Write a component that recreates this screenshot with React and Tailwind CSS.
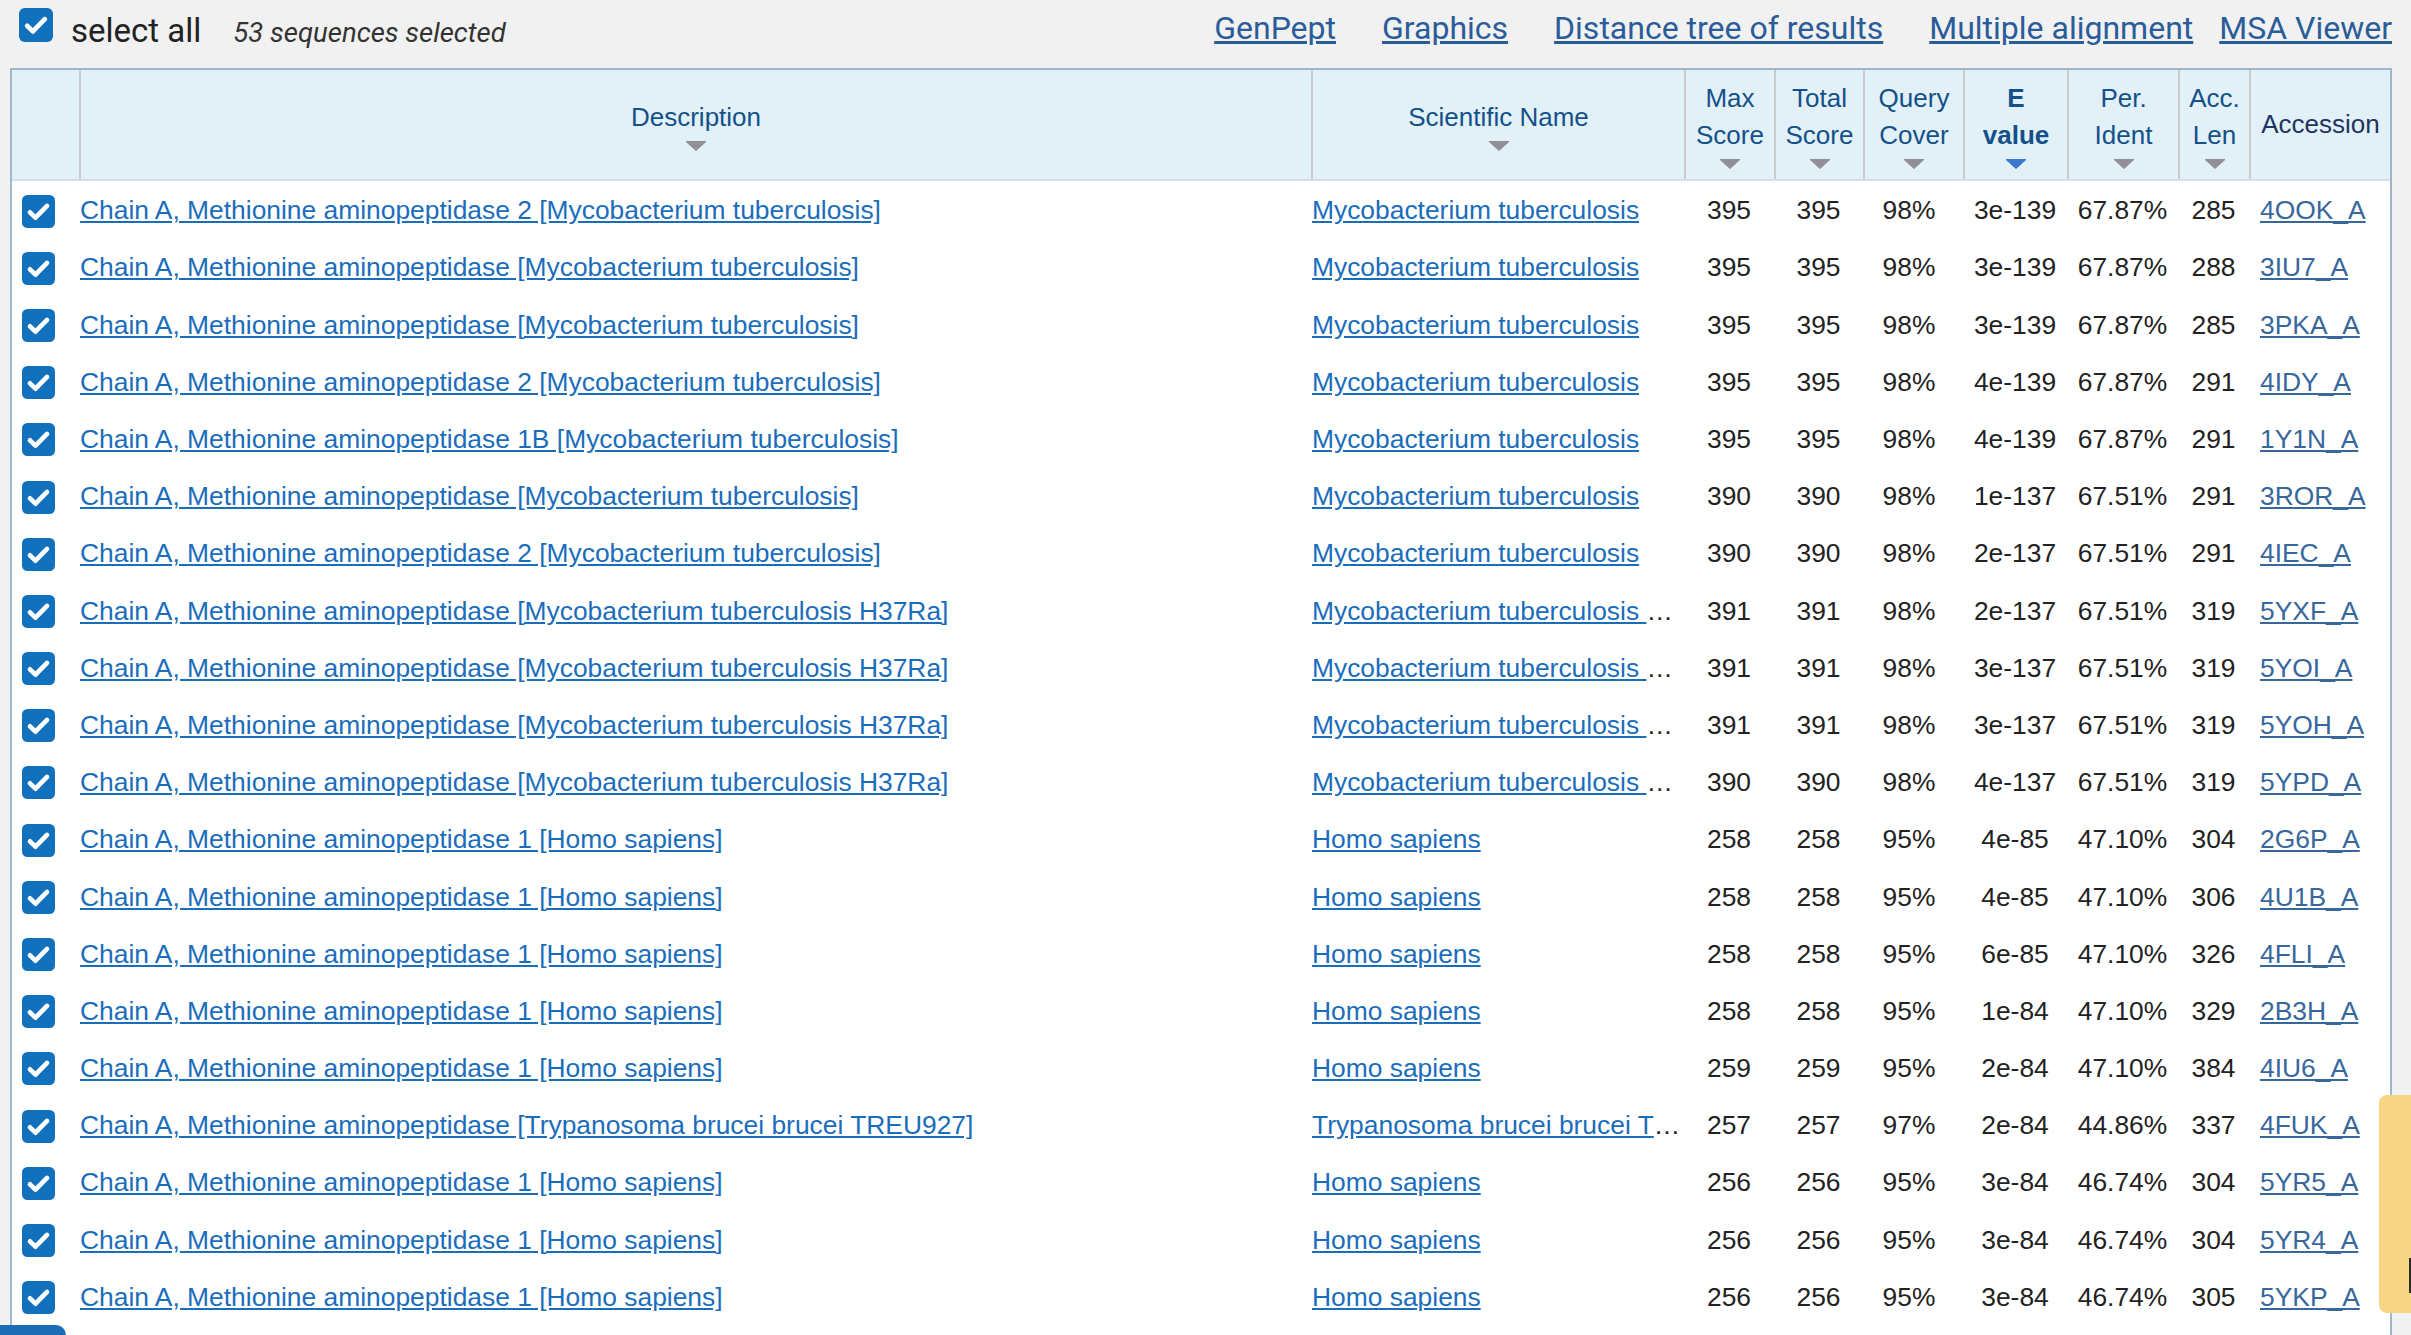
import React from 'react';

const rows = [
  ['Chain A, Methionine aminopeptidase 2 [Mycobacterium tuberculosis]', 'Mycobacterium tuberculosis', '395', '395', '98%', '3e-139', '67.87%', '285', '4OOK_A'],
  ['Chain A, Methionine aminopeptidase [Mycobacterium tuberculosis]', 'Mycobacterium tuberculosis', '395', '395', '98%', '3e-139', '67.87%', '288', '3IU7_A'],
  ['Chain A, Methionine aminopeptidase [Mycobacterium tuberculosis]', 'Mycobacterium tuberculosis', '395', '395', '98%', '3e-139', '67.87%', '285', '3PKA_A'],
  ['Chain A, Methionine aminopeptidase 2 [Mycobacterium tuberculosis]', 'Mycobacterium tuberculosis', '395', '395', '98%', '4e-139', '67.87%', '291', '4IDY_A'],
  ['Chain A, Methionine aminopeptidase 1B [Mycobacterium tuberculosis]', 'Mycobacterium tuberculosis', '395', '395', '98%', '4e-139', '67.87%', '291', '1Y1N_A'],
  ['Chain A, Methionine aminopeptidase [Mycobacterium tuberculosis]', 'Mycobacterium tuberculosis', '390', '390', '98%', '1e-137', '67.51%', '291', '3ROR_A'],
  ['Chain A, Methionine aminopeptidase 2 [Mycobacterium tuberculosis]', 'Mycobacterium tuberculosis', '390', '390', '98%', '2e-137', '67.51%', '291', '4IEC_A'],
  ['Chain A, Methionine aminopeptidase [Mycobacterium tuberculosis H37Ra]', 'Mycobacterium tuberculosis H37Ra', '391', '391', '98%', '2e-137', '67.51%', '319', '5YXF_A'],
  ['Chain A, Methionine aminopeptidase [Mycobacterium tuberculosis H37Ra]', 'Mycobacterium tuberculosis H37Ra', '391', '391', '98%', '3e-137', '67.51%', '319', '5YOI_A'],
  ['Chain A, Methionine aminopeptidase [Mycobacterium tuberculosis H37Ra]', 'Mycobacterium tuberculosis H37Ra', '391', '391', '98%', '3e-137', '67.51%', '319', '5YOH_A'],
  ['Chain A, Methionine aminopeptidase [Mycobacterium tuberculosis H37Ra]', 'Mycobacterium tuberculosis H37Ra', '390', '390', '98%', '4e-137', '67.51%', '319', '5YPD_A'],
  ['Chain A, Methionine aminopeptidase 1 [Homo sapiens]', 'Homo sapiens', '258', '258', '95%', '4e-85', '47.10%', '304', '2G6P_A'],
  ['Chain A, Methionine aminopeptidase 1 [Homo sapiens]', 'Homo sapiens', '258', '258', '95%', '4e-85', '47.10%', '306', '4U1B_A'],
  ['Chain A, Methionine aminopeptidase 1 [Homo sapiens]', 'Homo sapiens', '258', '258', '95%', '6e-85', '47.10%', '326', '4FLI_A'],
  ['Chain A, Methionine aminopeptidase 1 [Homo sapiens]', 'Homo sapiens', '258', '258', '95%', '1e-84', '47.10%', '329', '2B3H_A'],
  ['Chain A, Methionine aminopeptidase 1 [Homo sapiens]', 'Homo sapiens', '259', '259', '95%', '2e-84', '47.10%', '384', '4IU6_A'],
  ['Chain A, Methionine aminopeptidase [Trypanosoma brucei brucei TREU927]', 'Trypanosoma brucei brucei TREU927', '257', '257', '97%', '2e-84', '44.86%', '337', '4FUK_A'],
  ['Chain A, Methionine aminopeptidase 1 [Homo sapiens]', 'Homo sapiens', '256', '256', '95%', '3e-84', '46.74%', '304', '5YR5_A'],
  ['Chain A, Methionine aminopeptidase 1 [Homo sapiens]', 'Homo sapiens', '256', '256', '95%', '3e-84', '46.74%', '304', '5YR4_A'],
  ['Chain A, Methionine aminopeptidase 1 [Homo sapiens]', 'Homo sapiens', '256', '256', '95%', '3e-84', '46.74%', '305', '5YKP_A'],
  ['Chain A, Methionine aminopeptidase 1 [Homo sapiens]', 'Homo sapiens', '256', '256', '95%', '3e-84', '46.74%', '305', '5YKQ_A'],
];

const gridCols = 'grid grid-cols-[67px_1232px_373px_90px_89px_100px_104px_111px_71px_141px]';

function CheckBox({ className }) {
  return (
    <svg className={className} viewBox="0 0 24 24">
      <rect x="0" y="0" width="24" height="24" rx="4" fill="#1271bd" />
      <path d="M5.8 12.6l4 3.9 8.4-8.6" fill="none" stroke="#fff" strokeWidth="3.4" strokeLinecap="round" strokeLinejoin="round" />
    </svg>
  );
}

function SortArrow({ active }) {
  return (
    <svg className="mt-[5px] w-[22px] h-[10px]" viewBox="0 0 22 10">
      <polygon points="1,0.5 21,0.5 11,9.5" fill={active ? '#3a77d1' : '#8f8f95'} stroke={active ? '#3a77d1' : '#8f8f95'} strokeLinejoin="round" />
    </svg>
  );
}

function HeadCell({ lines, bold, noSort, dark }) {
  return (
    <div className="flex flex-col items-center justify-center border-l-2 border-[#cbcbcb]">
      {lines.map((l) => (
        <span key={l} className={`leading-[37px] ${bold ? 'font-bold' : ''} ${dark ? 'text-[#1e355f]' : 'text-[#14508a]'}`}>
          {l}
        </span>
      ))}
      {!noSort && <SortArrow active={bold} />}
    </div>
  );
}

export default function App() {
  return (
    <div className="h-screen overflow-hidden bg-[#f1f1f1] font-['Liberation_Sans',Arial,sans-serif]">
      <div className="flex items-baseline h-[68px] pt-[8px] pl-[19px] pr-[19px] font-['Roboto',sans-serif]">
        <CheckBox className="w-[34px] h-[34px] shrink-0" />
        <span className="ml-[18px] text-[33px] leading-[33px] text-[#222]">select all</span>
        <span className="ml-[32px] text-[27.5px] leading-[27px] italic text-[#333]">53 sequences selected</span>
        <div className="ml-auto self-start mt-[4px] flex items-baseline text-[32px] leading-[32px] text-[#2a5c99]">
          <a className="underline">GenPept</a>
          <a className="underline ml-[46px]">Graphics</a>
          <a className="underline ml-[46px]">Distance tree of results</a>
          <a className="underline ml-[46px]">Multiple alignment</a>
          <a className="underline ml-[26px]">MSA Viewer</a>
        </div>
      </div>

      <div className="ml-[10px] w-[2382px] border-2 border-[#a0b6cd] bg-white text-[26.4px]">
        <div className={`${gridCols} h-[111px] bg-[#e1f1f7] border-b-2 border-[#d3e0ea] text-[26px]`}>
          <div />
          <HeadCell lines={['Description']} />
          <HeadCell lines={['Scientific Name']} />
          <HeadCell lines={['Max', 'Score']} />
          <HeadCell lines={['Total', 'Score']} />
          <HeadCell lines={['Query', 'Cover']} />
          <HeadCell lines={['E', 'value']} bold />
          <HeadCell lines={['Per.', 'Ident']} />
          <HeadCell lines={['Acc.', 'Len']} />
          <HeadCell lines={['Accession']} noSort dark />
        </div>

        {rows.map((r, i) => (
          <div key={i} className={`${gridCols} h-[57.2px] pt-[3px] items-center text-[#222]`}>
            <div className="pl-[10px] flex">
              <CheckBox className="w-[33px] h-[33px]" />
            </div>
            <div className="pl-[1px] whitespace-nowrap">
              <a className="underline text-[#1a6dbb]">{r[0]}</a>
            </div>
            <div className="pl-[1px] whitespace-nowrap overflow-hidden text-ellipsis">
              <a className="underline text-[#1a6dbb]">{r[1]}</a>
            </div>
            <div className="text-center">{r[2]}</div>
            <div className="text-center">{r[3]}</div>
            <div className="text-center pr-[8px]">{r[4]}</div>
            <div className="text-center">{r[5]}</div>
            <div className="text-center">{r[6]}</div>
            <div className="text-center">{r[7]}</div>
            <div className="pl-[11px]">
              <a className="underline text-[#38679c]">{r[8]}</a>
            </div>
          </div>
        ))}
      </div>

      <div className="fixed left-0 bottom-0 w-[66px] h-[10px] rounded-tr-[10px] bg-[#1c6cb5]" />
      <div className="fixed right-0 top-[1095px] w-[32px] h-[218px] rounded-l-[8px] bg-[#f7d687] flex items-end justify-end pb-[20px]">
        <div className="w-[2px] h-[35px] bg-[#2a2a2a]" />
      </div>
    </div>
  );
}
